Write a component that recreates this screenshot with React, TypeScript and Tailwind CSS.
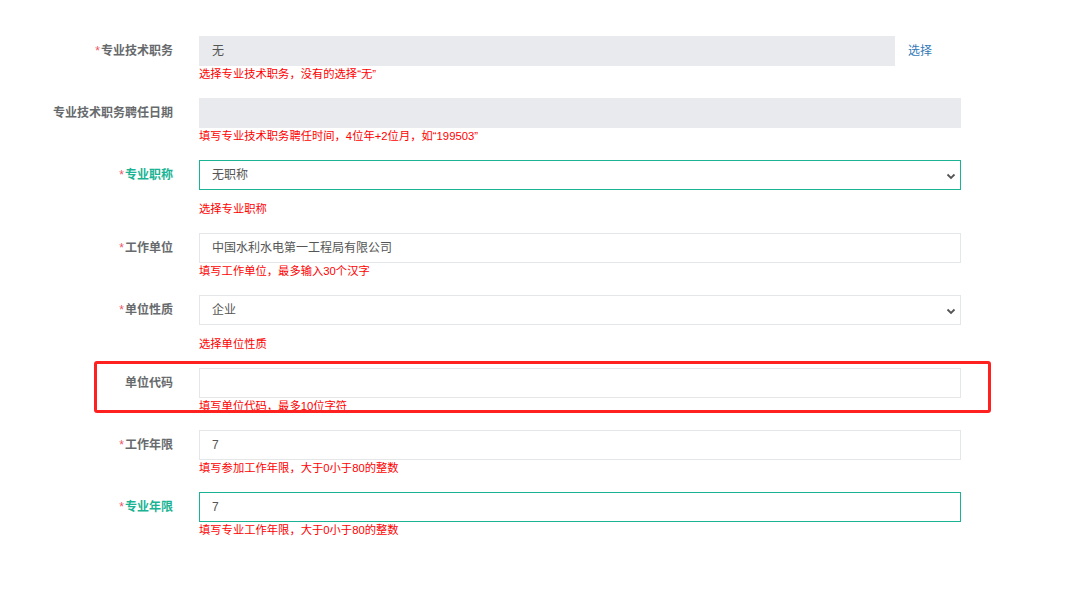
import React from "react";

type Field = {
  label: string;
  required?: boolean;
  active?: boolean;
  kind: "input" | "disabled" | "select";
  value: string;
  help: string;
  link?: string;
  short?: boolean;
  marked?: boolean;
};

const fields: Field[] = [
  { label: "专业技术职务", required: true, kind: "disabled", value: "无", help: "选择专业技术职务，没有的选择“无”", link: "选择", short: true },
  { label: "专业技术职务聘任日期", kind: "disabled", value: "", help: "填写专业技术职务聘任时间，4位年+2位月，如“199503”" },
  { label: "专业职称", required: true, active: true, kind: "select", value: "无职称", help: "选择专业职称" },
  { label: "工作单位", required: true, kind: "input", value: "中国水利水电第一工程局有限公司", help: "填写工作单位，最多输入30个汉字" },
  { label: "单位性质", required: true, kind: "select", value: "企业", help: "选择单位性质" },
  { label: "单位代码", kind: "input", value: "", help: "填写单位代码，最多10位字符", marked: true },
  { label: "工作年限", required: true, kind: "input", value: "7", help: "填写参加工作年限，大于0小于80的整数" },
  { label: "专业年限", required: true, active: true, kind: "input", value: "7", help: "填写专业工作年限，大于0小于80的整数" },
];

function Chevron() {
  return (
    <svg width="10" height="7" viewBox="0 0 10 7" className="absolute right-[4px] top-[12px]">
      <path d="M1.5 1.5 L5 5 L8.5 1.5" fill="none" stroke="#555" strokeWidth="1.8" />
    </svg>
  );
}

function Row({ f }: { f: Field }) {
  const box =
    f.kind === "disabled"
      ? "bg-[#e8eaed] border-[#e8eaed]"
      : f.active
      ? "bg-white border-[#1ab394]"
      : "bg-white border-[#e5e6e7]";
  return (
    <div className="relative flex items-start mb-[16px]">
      <div
        className={`w-[173px] h-[30px] flex items-center justify-end text-[12px] font-bold ${
          f.active ? "text-[#1ab394]" : "text-[#676a6c]"
        }`}
      >
        {f.required && <span className="text-[#ed5565] font-normal mr-[1px]">*</span>}
        {f.label}
      </div>
      <div className="ml-[26px] flex flex-col">
        <div className="flex items-center">
          <div
            className={`relative h-[30px] border flex items-center pl-[12px] text-[12px] text-[#555] ${box} ${
              f.short ? "w-[696px]" : "w-[762px]"
            }`}
          >
            {f.value}
            {f.kind === "select" && <Chevron />}
          </div>
          {f.link && <span className="ml-[13px] text-[12px] text-[#337ab7]">{f.link}</span>}
        </div>
        <div
          className={`text-[11.3px] leading-[15px] text-[#ff0000] ${
            f.kind === "select" ? "mt-[12px]" : "mt-[1px]"
          }`}
        >
          {f.help}
        </div>
      </div>
      {f.marked && (
        <div className="absolute left-[94px] top-[-7px] w-[897px] h-[52px] border-[3px] border-[#ff2020] rounded-[3px]" />
      )}
    </div>
  );
}

export default function App() {
  return (
    <div
      className="w-[1080px] h-[599px] bg-white pt-[36px] overflow-hidden"
      style={{ fontFamily: '"Liberation Sans", "Noto Sans CJK SC", sans-serif' }}
    >
      {fields.map((f) => (
        <Row key={f.label} f={f} />
      ))}
    </div>
  );
}
